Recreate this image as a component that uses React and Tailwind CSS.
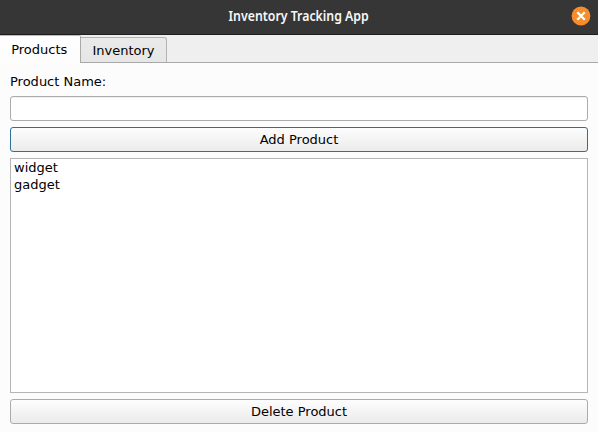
import React from "react";

const products = ["widget", "gadget"];

function TitleBar() {
  return (
    <header className="relative flex h-[35px] items-center justify-center border-b border-[#1f1d1d] bg-[#363636]">
      <h1 className="h-[34px] origin-center scale-x-[0.88] whitespace-nowrap font-['Noto_Sans',sans-serif] text-[14px] leading-[31px] font-semibold text-[#f7f7f7]">
        Inventory Tracking App
      </h1>
      <button aria-label="Close" className="absolute top-[6px] right-[7px] size-5">
        <svg viewBox="0 0 20 20" className="block size-5">
          <circle cx="10" cy="10" r="9.4" fill="#f68d2a" />
          <path d="M6.3 6.3 L13.7 13.7 M13.7 6.3 L6.3 13.7" stroke="#ffffff" strokeWidth="2.3" />
        </svg>
      </button>
    </header>
  );
}

function Tabs() {
  return (
    <nav className="flex h-7 items-end bg-[#efefef] shadow-[inset_0_-1px_0_#a9a9a9]">
      <button className="h-7 w-[81px] rounded-tr-[2px] border-t border-r border-t-[#bcbcbc] border-r-[#a9a9a9] bg-linear-to-b from-white to-[#fcfcfc] pr-[1.5px] pb-px leading-[27px]">
        Products
      </button>
      <button className="h-[26px] w-[86px] rounded-tr-[3px] border-t border-r border-b border-[#b4b4b4] border-b-[#a9a9a9] bg-linear-to-b from-[#eaeaea] to-[#e6e6e6] leading-[25px]">
        Inventory
      </button>
    </nav>
  );
}

function PushButton({ children, focused }) {
  return (
    <button
      className={`h-[25px] shrink-0 rounded-[3px] border bg-linear-to-b from-[#fdfdfd] to-[#ebebeb] leading-[23px] ${
        focused ? "border-[#306e9a]" : "border-[#ababab]"
      }`}
    >
      {children}
    </button>
  );
}

export default function App() {
  return (
    <div className="flex h-[432px] w-[598px] flex-col overflow-hidden bg-[#fcfcfc] font-['DejaVu_Sans',sans-serif] text-[13px] text-black">
      <TitleBar />
      <Tabs />
      <main className="flex flex-1 flex-col gap-[6px] px-[10px] pt-[11px] pb-2">
        <label htmlFor="product" className="h-4 leading-4">
          Product Name:
        </label>
        <input id="product" className="h-[25px] shrink-0 rounded-[3px] border border-[#ababab] bg-white shadow-[inset_0_1px_0_#f1f1f1] outline-none" />
        <PushButton focused>Add Product</PushButton>
        <ul className="flex-1 border border-[#b5b5b5] bg-white px-[3px]">
          {products.map((name) => (
            <li key={name} className="h-[17px] leading-[17px]">
              {name}
            </li>
          ))}
        </ul>
        <PushButton>Delete Product</PushButton>
      </main>
    </div>
  );
}
